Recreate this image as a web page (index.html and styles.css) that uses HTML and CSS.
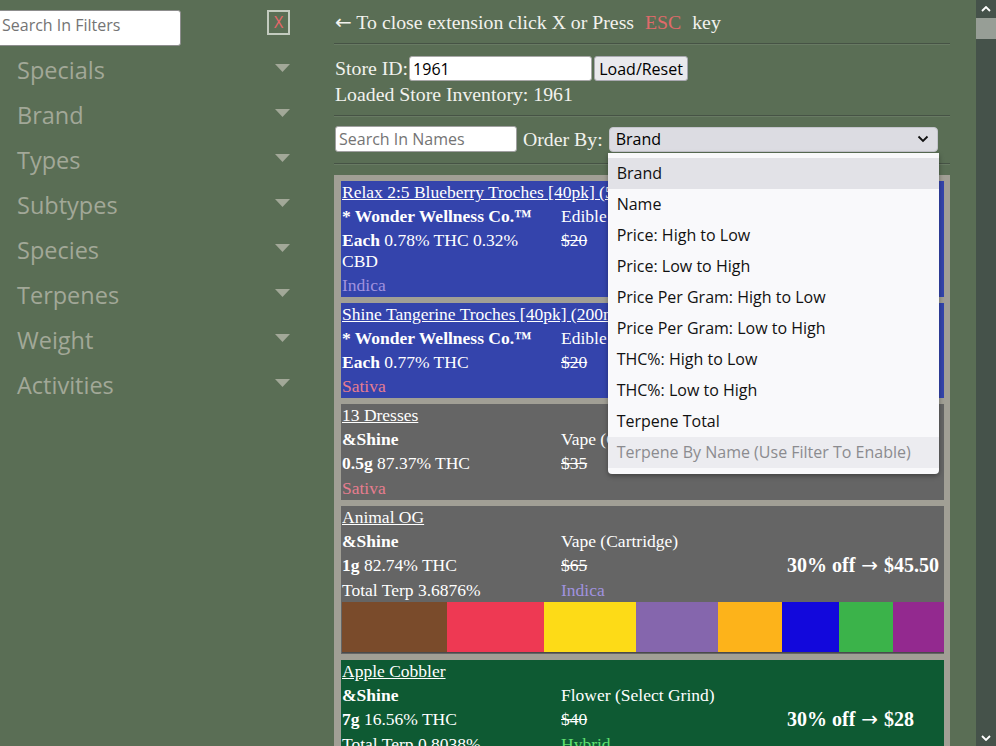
FILE: index.html
```html
<!DOCTYPE html>
<html>
<head>
<meta charset="utf-8">
<title>Store Inventory</title>
<link rel="stylesheet" href="styles.css">
</head>
<body>
<div class="app">
  <aside class="sidebar">
    <div class="side-top">
      <input class="filter-search" type="text" placeholder="Search In Filters">
      <button class="close-btn">X</button>
    </div>
    <ul class="filters">
      <li><span>Specials</span><svg class="tri" width="15" height="8" viewBox="0 0 15 8"><polygon points="0,0 15,0 7.5,8"/></svg></li>
      <li><span>Brand</span><svg class="tri" width="15" height="8" viewBox="0 0 15 8"><polygon points="0,0 15,0 7.5,8"/></svg></li>
      <li><span>Types</span><svg class="tri" width="15" height="8" viewBox="0 0 15 8"><polygon points="0,0 15,0 7.5,8"/></svg></li>
      <li><span>Subtypes</span><svg class="tri" width="15" height="8" viewBox="0 0 15 8"><polygon points="0,0 15,0 7.5,8"/></svg></li>
      <li><span>Species</span><svg class="tri" width="15" height="8" viewBox="0 0 15 8"><polygon points="0,0 15,0 7.5,8"/></svg></li>
      <li><span>Terpenes</span><svg class="tri" width="15" height="8" viewBox="0 0 15 8"><polygon points="0,0 15,0 7.5,8"/></svg></li>
      <li><span>Weight</span><svg class="tri" width="15" height="8" viewBox="0 0 15 8"><polygon points="0,0 15,0 7.5,8"/></svg></li>
      <li><span>Activities</span><svg class="tri" width="15" height="8" viewBox="0 0 15 8"><polygon points="0,0 15,0 7.5,8"/></svg></li>
    </ul>
  </aside>

  <main class="main">
    <p class="hint"><span class="arr">←</span> To close extension click X or Press <span class="esc">ESC</span> key</p>
    <div class="divider d1"></div>
    <div class="store-row">
      <span>Store ID:</span><input class="store-input" type="text" value="1961"><button class="load-btn">Load/Reset</button>
    </div>
    <div class="loaded">Loaded Store Inventory: 1961</div>
    <div class="divider d2"></div>
    <div class="search-row">
      <input class="name-search" type="text" placeholder="Search In Names">
      <span class="order-label">Order By:</span>
      <div class="select-wrap">
        <div class="select"><span>Brand</span><svg width="12" height="8" viewBox="0 0 12 8"><polyline points="1.5,1.5 6,6 10.5,1.5" fill="none" stroke="#111" stroke-width="1.8"/></svg></div>
        <ul class="popup">
          <li class="hl">Brand</li>
          <li>Name</li>
          <li>Price: High to Low</li>
          <li>Price: Low to High</li>
          <li>Price Per Gram: High to Low</li>
          <li>Price Per Gram: Low to High</li>
          <li>THC%: High to Low</li>
          <li>THC%: Low to High</li>
          <li>Terpene Total</li>
          <li class="disabled">Terpene By Name (Use Filter To Enable)</li>
        </ul>
      </div>
    </div>
    <div class="divider d3"></div>

    <div class="results">
      <div class="card blue">
        <a class="title">Relax 2:5 Blueberry Troches [40pk] (50mg CBD : 200mg THC)</a>
        <div class="c1"><b>* Wonder Wellness Co.™</b></div><div class="c2">Edible (Troche)</div><div class="c3"></div>
        <div class="c1"><b>Each</b> 0.78% THC 0.32% CBD</div><div class="c2"><s>$20</s></div><div class="c3"></div>
        <div class="c1 indica">Indica</div><div class="c2"></div><div class="c3"></div>
      </div>

      <div class="card blue">
        <a class="title">Shine Tangerine Troches [40pk] (200mg THC)</a>
        <div class="c1"><b>* Wonder Wellness Co.™</b></div><div class="c2">Edible (Troche)</div><div class="c3"></div>
        <div class="c1"><b>Each</b> 0.77% THC</div><div class="c2"><s>$20</s></div><div class="c3"></div>
        <div class="c1 sativa">Sativa</div><div class="c2"></div><div class="c3"></div>
      </div>

      <div class="card gray">
        <a class="title">13 Dresses</a>
        <div class="c1"><b>&amp;Shine</b></div><div class="c2">Vape (Cartridge)</div><div class="c3"></div>
        <div class="c1"><b>0.5g</b> 87.37% THC</div><div class="c2"><s>$35</s></div><div class="c3"><b class="deal">30% off <span class="arr">→</span> $24.50</b></div>
        <div class="c1 sativa">Sativa</div><div class="c2"></div><div class="c3"></div>
      </div>

      <div class="card gray">
        <a class="title">Animal OG</a>
        <div class="c1"><b>&amp;Shine</b></div><div class="c2">Vape (Cartridge)</div><div class="c3"></div>
        <div class="c1"><b>1g</b> 82.74% THC</div><div class="c2"><s>$65</s></div><div class="c3"><b class="deal">30% off <span class="arr">→</span> $45.50</b></div>
        <div class="c1">Total Terp 3.6876%</div><div class="c2 indica">Indica</div><div class="c3"></div>
        <div class="terp-bar">
          <span class="seg" style="width:105px;background:#7a4b2b"></span>
          <span class="seg" style="width:97px;background:#ee3953"></span>
          <span class="seg" style="width:92px;background:#fddb17"></span>
          <span class="seg" style="width:82px;background:#8566ad"></span>
          <span class="seg" style="width:64px;background:#fdb31a"></span>
          <span class="seg" style="width:57px;background:#1208dc"></span>
          <span class="seg" style="width:54px;background:#3bb34a"></span>
          <span class="seg" style="width:51px;background:#93298f"></span>
        </div>
      </div>

      <div class="card green">
        <a class="title">Apple Cobbler</a>
        <div class="c1"><b>&amp;Shine</b></div><div class="c2">Flower (Select Grind)</div><div class="c3"></div>
        <div class="c1"><b>7g</b> 16.56% THC</div><div class="c2"><s>$40</s></div><div class="c3"><b class="deal">30% off <span class="arr">→</span> $28</b></div>
        <div class="c1">Total Terp 0.8038%</div><div class="c2 hybrid">Hybrid</div><div class="c3"></div>
      </div>
    </div>
  </main>

  <div class="spacer"></div>

  <div class="scrollbar">
    <div class="sb-btn"><svg width="10" height="6" viewBox="0 0 10 6"><polyline points="1,5 5,1 9,5" fill="none" stroke="#fff" stroke-width="1.8"/></svg></div>
    <div class="sb-thumb"></div>
    <div class="sb-track"></div>
    <div class="sb-btn sb-down"><svg width="10" height="6" viewBox="0 0 10 6"><polyline points="1,1 5,5 9,1" fill="none" stroke="#fff" stroke-width="1.8"/></svg></div>
  </div>
</div>
</body>
</html>
```
FILE: styles.css
```css
html, body {
  margin: 0;
  padding: 0;
  height: 746px;
  overflow: hidden;
  background: #5a6e55;
}

.app {
  display: flex;
  height: 746px;
}

/* ---------- sidebar ---------- */
.sidebar {
  width: 334px;
  flex: none;
  padding-top: 10px;
  box-sizing: border-box;
  font-family: "Open Sans", "Noto Sans", sans-serif;
}

.side-top {
  display: flex;
  align-items: flex-start;
}

.filter-search {
  width: 182px;
  height: 36px;
  margin-left: -1px;
  box-sizing: border-box;
  border: 1px solid #8d8d8d;
  border-radius: 0 3px 3px 0;
  padding: 0 2px 7px;
  font-family: "Open Sans", sans-serif;
  font-size: 16px;
  color: #222;
  background: #fff;
  outline: none;
}
.filter-search::placeholder { color: #747474; }

.close-btn {
  margin-left: 86px;
  width: 23px;
  height: 25px;
  box-sizing: border-box;
  padding: 0;
  border: 2px solid #c3cbbf;
  background: transparent;
  color: #e8676a;
  font-family: "Open Sans", sans-serif;
  font-size: 16px;
  line-height: 19px;
}

.filters {
  list-style: none;
  margin: 1px 0 0;
  padding: 0 0 0 17px;
  width: 290px;
  box-sizing: border-box;
}
.filters li {
  height: 45px;
  display: flex;
  align-items: center;
  justify-content: space-between;
  font-size: 23.5px;
  color: #a2a898;
}
.filters .tri {
  fill: #a2a898;
  margin-bottom: 3px;
}

/* ---------- main ---------- */
.main {
  width: 616px;
  flex: none;
  padding-top: 11px;
  box-sizing: border-box;
  font-family: "Liberation Serif", "Times New Roman", serif;
  font-size: 19.8px;
  color: #f2f2ee;
}

.hint {
  margin: 0 0 0 1px;
  height: 22px;
  line-height: 22px;
}
.hint .arr {
  font-family: "DejaVu Sans", sans-serif;
  font-size: 20px;
  line-height: 1;
}
.esc {
  color: #e06a6a;
  margin: 0 6px;
}

.divider {
  height: 0;
  border-top: 1px solid #465345;
  border-bottom: 1px solid #687a63;
}
.d1 { margin: 10px 0 11px; }
.d2 { margin: 10px 0 9px; }
.d3 { margin: 11px 0 10px; }

.store-row {
  display: flex;
  align-items: center;
  height: 25px;
  padding-left: 1px;
}
.store-input {
  width: 183px;
  height: 25px;
  box-sizing: border-box;
  margin-left: 1px;
  border: 1px solid #a8a8a8;
  border-radius: 3px;
  padding: 0 3px;
  font-family: "Open Sans", sans-serif;
  font-size: 16px;
  color: #000;
  background: #fff;
}
.load-btn {
  margin-left: 2px;
  width: 94px;
  height: 25px;
  box-sizing: border-box;
  border: 1px solid #a9a9b1;
  border-radius: 3px;
  background: #e9e9ed;
  font-family: "Open Sans", sans-serif;
  font-size: 16px;
  color: #000;
  padding: 0;
}

.loaded {
  margin-top: 2px;
  padding-left: 1px;
  line-height: 22px;
}

.search-row {
  display: flex;
  align-items: center;
  height: 26px;
}
.name-search {
  width: 182px;
  height: 26px;
  box-sizing: border-box;
  margin-left: 1px;
  border: 1px solid #a0a0a0;
  border-radius: 3px;
  padding: 0 3px;
  font-family: "Open Sans", sans-serif;
  font-size: 16px;
  background: #fff;
}
.name-search::placeholder { color: #747474; }
.order-label {
  margin-left: 6px;
}
.select-wrap {
  position: relative;
  margin-left: 6px;
}
.select {
  width: 329px;
  height: 25px;
  box-sizing: border-box;
  border: 1px solid #c4c4cc;
  border-radius: 4px;
  background: #dcdce2;
  display: flex;
  align-items: center;
  justify-content: space-between;
  padding: 0 8px 0 6px;
  font-family: "Open Sans", sans-serif;
  font-size: 16px;
  color: #000;
}

.popup {
  position: absolute;
  left: -1px;
  top: 26px;
  width: 331px;
  box-sizing: border-box;
  margin: 0;
  padding: 5px 0 6px;
  list-style: none;
  background: #f9f9fb;
  border-radius: 0 0 4px 4px;
  box-shadow: 0 2px 5px rgba(0, 0, 0, 0.35);
  z-index: 5;
  font-family: "Open Sans", sans-serif;
  font-size: 16px;
  color: #111;
}
.popup li {
  height: 31px;
  line-height: 31px;
  padding-left: 9px;
}
.popup .hl { background: #e2e2e7; }
.popup .disabled { background: #ececf0; color: #8b8b8f; }

/* ---------- results ---------- */
.results {
  background: #a19f95;
  padding: 6px 6px 6px 7px;
  display: flex;
  flex-direction: column;
  gap: 6px;
}

.card {
  display: grid;
  grid-template-columns: 205px 212px 1fr;
  column-gap: 14px;
  row-gap: 3px;
  padding: 1px 0 1px 1px;
  font-size: 17.5px;
  line-height: 21px;
  color: #fff;
}
.card.blue { background: #3444ac; }
.card.gray { background: #656565; }
.card.green { background: #0e5a33; }

.card .title {
  grid-column: 1 / -1;
  color: #fff;
  text-decoration: underline;
  white-space: nowrap;
  overflow: hidden;
}
.card b { font-weight: bold; }
.card .deal {
  font-size: 20px;
  white-space: nowrap;
}
.card .deal .arr {
  font-family: "DejaVu Sans", sans-serif;
  font-weight: normal;
  font-size: 20px;
  line-height: 1;
  margin: 0 1px;
}

.indica { color: #a092df; }
.sativa { color: #e77d8f; }
.hybrid { color: #5fe070; }

.terp-bar {
  grid-column: 1 / -1;
  display: flex;
  height: 50px;
  margin-top: -2px;
  border-bottom: 1px solid #4a4a4a;
}
.seg {
  display: block;
  height: 100%;
  flex: none;
}

.spacer {
  width: 26px;
  flex: none;
}

/* ---------- scrollbar ---------- */
.scrollbar {
  width: 20px;
  flex: none;
  display: flex;
  flex-direction: column;
  background: #45524a;
}
.sb-btn {
  height: 18px;
  display: flex;
  align-items: center;
  justify-content: center;
  flex: none;
}
.sb-down { height: 16px; }
.sb-thumb {
  height: 21px;
  background: #979e96;
  flex: none;
}
.sb-track {
  flex: 1;
}
```
